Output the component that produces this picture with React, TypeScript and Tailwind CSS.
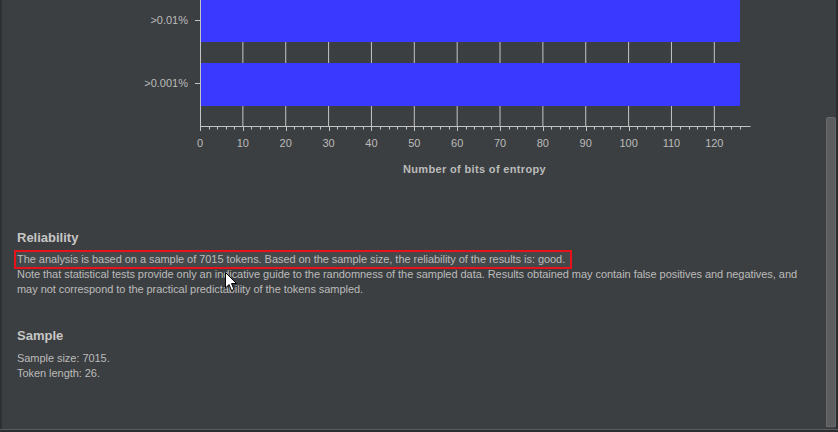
import React from "react";

/* ------------------------------------------------------------------ */
/* Chart geometry (page coords, svg viewBox is offset by the left rule) */
const X0 = 200;
const PX_PER_UNIT = 4.286;
const xAt = (v: number) => X0 + v * PX_PER_UNIT;
const AXIS_Y = 126.5;

const bars = [
  { label: ">0.01%", y: 0, h: 42, value: 126, labelY: 20 },
  { label: ">0.001%", y: 63, h: 43, value: 126, labelY: 83 },
];

const EntropyChart: React.FC = () => {
  const majors = Array.from({ length: 13 }, (_, i) => i * 10);
  const minors = Array.from({ length: 64 }, (_, i) => i * 2).filter((v) => v % 10 !== 0);

  return (
    <svg width={824} height={185} viewBox="2 0 824 185" className="block shrink-0">
      {/* grid lines, painted under the bars */}
      {majors.slice(1).map((v) => (
        <line key={`g${v}`} x1={xAt(v)} x2={xAt(v)} y1={0} y2={AXIS_Y} stroke="#c4c4c4" strokeWidth={1} />
      ))}

      {bars.map((b) => (
        <rect key={b.label} x={X0 + 1} y={b.y} width={xAt(b.value) - X0 - 1} height={b.h} fill="#3939ff" />
      ))}

      {/* y axis */}
      <line x1={X0 + 0.5} x2={X0 + 0.5} y1={0} y2={AXIS_Y + 0.5} stroke="#c4c4c4" />
      {bars.map((b) => (
        <g key={`y${b.label}`}>
          <line x1={195} x2={X0} y1={b.labelY + 0.5} y2={b.labelY + 0.5} stroke="#c4c4c4" />
          <text x={188} y={b.labelY + 4} textAnchor="end" fontSize={11} fill="#bbbbbb" fontFamily="'Liberation Sans', Arial, sans-serif">
            {b.label}
          </text>
        </g>
      ))}

      {/* x axis */}
      <line x1={X0} x2={750.5} y1={AXIS_Y} y2={AXIS_Y} stroke="#c4c4c4" />
      {minors.map((v) => (
        <line key={`m${v}`} x1={Math.round(xAt(v)) + 0.5} x2={Math.round(xAt(v)) + 0.5} y1={AXIS_Y} y2={129.5} stroke="#c4c4c4" />
      ))}
      {majors.map((v) => (
        <g key={`t${v}`}>
          <line x1={Math.round(xAt(v)) + 0.5} x2={Math.round(xAt(v)) + 0.5} y1={AXIS_Y} y2={131} stroke="#c4c4c4" />
          <text x={xAt(v)} y={147} textAnchor="middle" fontSize={11} fill="#bbbbbb" fontFamily="'Liberation Sans', Arial, sans-serif">
            {v}
          </text>
        </g>
      ))}

      <text x={474.5} y={173} textAnchor="middle" fontSize={11} fontWeight="bold" letterSpacing={0.35} fill="#bbbbbb" fontFamily="'Liberation Sans', Arial, sans-serif">
        Number of bits of entropy
      </text>
    </svg>
  );
};

/* ------------------------------------------------------------------ */
/* Mouse pointer overlay                                              */
const Pointer: React.FC = () => (
  <svg width={13} height={20} viewBox="0 0 13 20" className="absolute left-[225px] top-[272px]">
    <path d="M0.5 0.5 L0.5 16 L4 12.5 L6.5 18.5 L9 17.5 L6.5 11.5 L11.5 11.5 Z" fill="#ffffff" stroke="#000000" strokeWidth={1} strokeLinejoin="miter" />
  </svg>
);

export default function App() {
  return (
    <div className="relative flex flex-col w-[838px] h-[432px] overflow-hidden bg-[#3c3f41] font-['Liberation_Sans',Arial,sans-serif] text-[#bbbbbb]">
      <div className="flex flex-1 min-h-0">
        {/* left rule */}
        <div className="w-[2px] shrink-0 bg-[#2e3032]" />

        {/* report body */}
        <div className="flex flex-col flex-1 min-w-0">
          <EntropyChart />

          <section className="pl-[15px] pt-[45px]">
            <h2 className="text-[13px] leading-[16px] font-bold text-[#c6c6c6]">Reliability</h2>
            <div className="mt-[6px] text-[11px] leading-[15px] tracking-[-0.05px]">
              <div>
                <span className="inline-block -ml-[1px] pl-[1px] pr-[5px] bg-[#46494b] outline-2 outline-[#e8121b]">
                  The analysis is based on a sample of 7015 tokens. Based on the sample size, the reliability of the results is: good.
                </span>
              </div>
              <p>
                Note that statistical tests provide only an indicative guide to the randomness of the sampled data. Results obtained may contain false positives and negatives, and
                <br />
                may not correspond to the practical predictability of the tokens sampled.
              </p>
            </div>
          </section>

          <section className="pl-[15px] pt-[31px]">
            <h2 className="text-[13px] leading-[16px] font-bold text-[#c6c6c6]">Sample</h2>
            <div className="mt-[7px] text-[11px] leading-[15px] tracking-[-0.05px]">
              <p>Sample size: 7015.</p>
              <p>Token length: 26.</p>
            </div>
          </section>
        </div>

        {/* vertical scrollbar */}
        <div className="w-[10px] shrink-0 flex flex-col pt-[117px] pb-[2px]">
          <div className="flex-1 rounded-t-[2px] bg-[#5b5d5f] border border-[#67696b]" />
        </div>
        <div className="w-[2px] shrink-0 bg-[#2b2d2f]" />
      </div>

      {/* bottom rule */}
      <div className="h-[1px] shrink-0 bg-[#5a5d5f]" />
      <div className="h-[2px] shrink-0 bg-[#2b2d2f]" />

      <Pointer />
    </div>
  );
}
